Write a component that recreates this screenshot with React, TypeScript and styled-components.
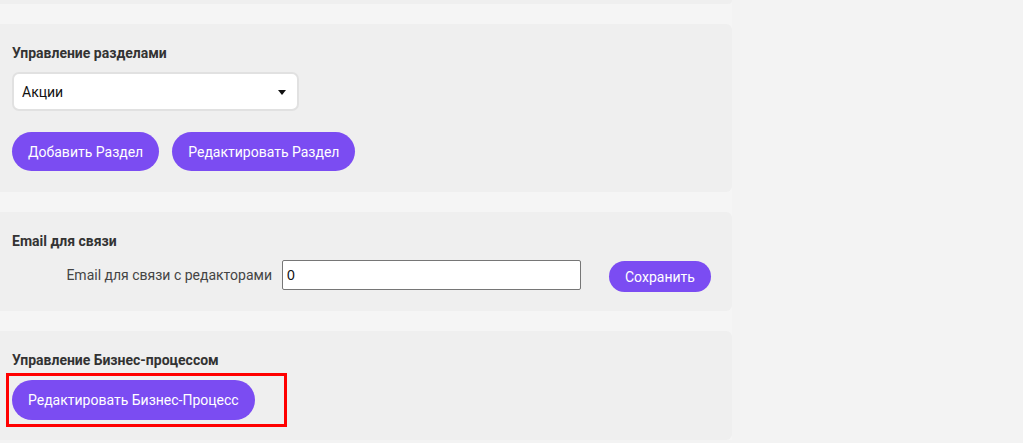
import { useState } from "react";
import styled, { createGlobalStyle } from "styled-components";

const GlobalStyle = createGlobalStyle`
  html, body {
    margin: 0;
    padding: 0;
    background: #f3f3f3;
    font-family: Roboto, "Noto Sans", Arial, sans-serif;
  }
`;

const Page = styled.div`
  width: 732px;
  background: #f5f5f5;
  overflow: hidden;
`;

const Column = styled.div`
  display: flex;
  flex-direction: column;
  gap: 20px;
`;

const Panel = styled.section<{ stub?: boolean; bottom?: number }>`
  background: #efefef;
  border-radius: ${(p) => (p.stub ? "0 0 6px 0" : "0 6px 6px 0")};
  padding: ${(p) => (p.stub ? "0" : `21px 12px ${p.bottom ?? 20}px`)};
  height: ${(p) => (p.stub ? "4px" : "auto")};
`;

const Title = styled.h3<{ gap?: number }>`
  margin: 0 0 ${(p) => p.gap ?? 10}px;
  font-size: 14px;
  line-height: 17px;
  font-weight: 700;
  color: #333;
`;

const SelectWrap = styled.div`
  position: relative;
  width: 287px;
  margin-bottom: 21px;

  &::after {
    content: "";
    position: absolute;
    right: 13px;
    top: 18px;
    border-left: 4px solid transparent;
    border-right: 4px solid transparent;
    border-top: 5px solid #111;
    pointer-events: none;
  }
`;

const Select = styled.select`
  appearance: none;
  width: 100%;
  height: 39px;
  box-sizing: border-box;
  border: 2px solid #e1e1e1;
  border-radius: 7px;
  background: #fff;
  padding: 0 8px;
  font-family: Roboto, "Noto Sans", Arial, sans-serif;
  font-size: 14px;
  color: #111;
  outline: none;
`;

const ButtonRow = styled.div`
  display: flex;
  gap: 13px;
`;

const Button = styled.button<{ h?: number }>`
  height: ${(p) => p.h ?? 39}px;
  padding: 0 16px;
  border: none;
  border-radius: 20px;
  background: #7b4cf2;
  color: #fff;
  font-family: Roboto, "Noto Sans", Arial, sans-serif;
  font-size: 14px;
  cursor: pointer;
  white-space: nowrap;
`;

const FormRow = styled.div`
  display: grid;
  grid-template-columns: 260px 299px auto;
  column-gap: 10px;
  align-items: center;
`;

const Label = styled.label`
  text-align: right;
  font-size: 14px;
  color: #444;
`;

const Input = styled.input`
  width: 299px;
  height: 30px;
  box-sizing: border-box;
  border: 1px solid #767676;
  border-radius: 2px;
  padding: 0 4px;
  font-family: "Liberation Sans", Arial, sans-serif;
  font-size: 14px;
  color: #111;
  background: #fff;
`;

const SaveCell = styled.div`
  padding-left: 18px;
  padding-top: 3px;
`;

const Highlight = styled.div`
  display: inline-block;
  margin-left: -6px;
  padding: 4px 29px 4px 3px;
  border: 3px solid #ff0000;
  margin-bottom: -7px;
`;

export default function App() {
  const [section, setSection] = useState("promo");
  const [email, setEmail] = useState("0");

  return (
    <>
      <GlobalStyle />
      <Page>
        <Column>
          <Panel stub />

          <Panel bottom={21}>
            <Title gap={10}>Управление разделами</Title>
            <SelectWrap>
              <Select value={section} onChange={(e) => setSection(e.target.value)}>
                <option value="promo">Акции</option>
                <option value="news">Новости</option>
              </Select>
            </SelectWrap>
            <ButtonRow>
              <Button>Добавить Раздел</Button>
              <Button>Редактировать Раздел</Button>
            </ButtonRow>
          </Panel>

          <Panel bottom={19}>
            <Title gap={8}>Email для связи</Title>
            <FormRow>
              <Label htmlFor="email">Email для связи с редакторами</Label>
              <Input id="email" value={email} onChange={(e) => setEmail(e.target.value)} />
              <SaveCell>
                <Button h={31}>Сохранить</Button>
              </SaveCell>
            </FormRow>
          </Panel>

          <Panel>
            <Title gap={4}>Управление Бизнес-процессом</Title>
            <Highlight>
              <Button h={40}>Редактировать Бизнес-Процесс</Button>
            </Highlight>
          </Panel>
        </Column>
      </Page>
    </>
  );
}
